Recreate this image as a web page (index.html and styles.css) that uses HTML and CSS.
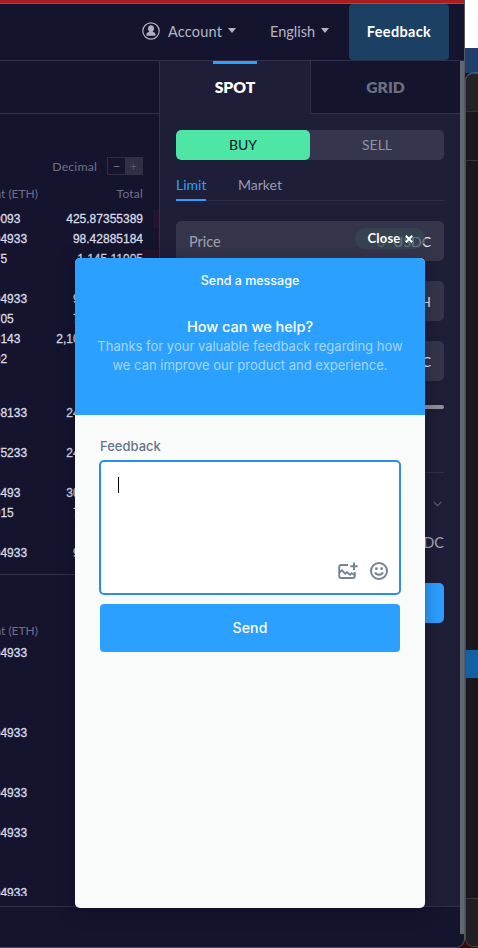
FILE: index.html
```html
<!DOCTYPE html>
<html lang="en">
<head>
<meta charset="utf-8">
<title>Spot trading</title>
<link rel="stylesheet" href="styles.css">
</head>
<body>
<div class="desktop">
  <div class="app">
    <header class="nav">
      <div class="nav-item account">
        <svg width="18" height="18" viewBox="0 0 18 18"><circle cx="9" cy="9" r="8.2" fill="none" stroke="#aeb0bf" stroke-width="1.2"/><path d="M9 3.2c2 0 3 1.5 3 3.3 0 1.5-.6 2.500-1.400 3 .3.8 3 .8 3 3.300 0 .8-.3 1-1 1H5.400c-.7 0-1-.2-1-1 0-2.500 2.700-2.500 3-3.300C6.600 9 6 8 6 6.500 6 4.700 7 3.200 9 3.200z" fill="#aeb0bf"/></svg>
        <span class="nav-text acc">Account</span><i class="caret"></i>
      </div>
      <div class="nav-item lang"><span class="nav-text eng">English</span><i class="caret"></i></div>
      <div class="feedback-btn"><span>Feedback</span></div>
    </header>
    <main class="content">
      <section class="book">
        <div class="book-top"></div>
        <div class="decimal"><span>Decimal</span><div class="step"><b>−</b><b class="plus">+</b></div></div>
        <div class="cols"><div class="amount-h"><span>Amount (ETH)</span></div><span class="total-h">Total</span></div>
        <div class="rows">
          <div class="row d1"><span>0093</span><span>425.87355389</span></div>
          <div class="row d2"><span>94933</span><span>98.42885184</span></div>
          <div class="row d3"><span>75</span><span>1,145.11905</span></div>
          <div class="row"></div>
          <div class="row"><span>94933</span><span>98.42885184</span></div>
          <div class="row"><span>705</span><span>78.42885184</span></div>
          <div class="row"><span>8143</span><span>2,109.42885184</span></div>
          <div class="row"><span>02</span></div>
          <div class="row"></div>
          <div class="row short"></div>
          <div class="row"><span>68133</span><span>248.42885184</span></div>
          <div class="row"></div>
          <div class="row"><span>75233</span><span>248.42885184</span></div>
          <div class="row"></div>
          <div class="row"><span>8493</span><span>308.42885184</span></div>
          <div class="row"><span>915</span><span>78.42885184</span></div>
          <div class="row"></div>
          <div class="row"><span>94933</span><span>98.42885184</span></div>
        </div>
        <div class="cols lower"><div class="amount-h"><span>Amount (ETH)</span></div></div>
        <div class="rows last">
          <div class="row"><span>94933</span></div>
          <div class="row"></div><div class="row"></div><div class="row"></div>
          <div class="row"><span>94933</span></div>
          <div class="row"></div><div class="row"></div>
          <div class="row"><span>94933</span></div>
          <div class="row"></div>
          <div class="row"><span>94933</span></div>
          <div class="row"></div><div class="row"></div>
          <div class="row"><span>94933</span></div>
        </div>
      </section>
      <section class="panel">
        <div class="tabs"><div class="tab on"><span>SPOT</span></div><div class="tab"><span>GRID</span></div></div>
        <div class="form">
          <div class="side"><div class="buy">BUY</div><div class="sell">SELL</div></div>
          <div class="types"><span class="type on">Limit</span><span class="type mk">Market</span></div>
          <div class="field"><span class="price">Price</span><span class="unit"><em>0</em>USDC</span></div>
          <div class="field"><span></span><span class="unit">ETH</span></div>
          <div class="field"><span></span><span class="unit">USDC</span></div>
          <div class="slider"></div>
          <div class="divider"></div>
          <div class="more"><svg width="9" height="6" viewBox="0 0 9 6"><path d="M.7.8l3.800 3.900L8.300.8" fill="none" stroke="#5c5e78" stroke-width="1.200"/></svg></div>
          <div class="sum">USDC</div>
          <div class="submit"></div>
        </div>
      </section>
      <div class="scroll"></div>
    </main>
    <footer class="foot"></footer>
  </div>
  <aside class="behind"><div class="white"></div><div class="navy"></div><div class="win"><div class="w1"></div><div class="w2"></div><div class="w3"></div><div class="sel"></div><div class="w4"></div><div class="w5"></div></div></aside>
</div>
<div class="close"><span>Close</span><svg width="8" height="8" viewBox="0 0 8 8"><path d="M.8.8l6.400 6.400M7.200.8L.8 7.200" stroke="#fff" stroke-width="2"/></svg></div>
<div class="widget">
  <div class="w-head">
    <div class="w-title">Send a message</div>
    <div class="w-ask">How can we help?</div>
    <div class="w-sub"><span class="s1">Thanks for your valuable feedback regarding how</span><br><span class="s2">we can improve our product and experience.</span></div>
  </div>
  <div class="w-body">
    <label class="w-label">Feedback</label>
    <div class="w-area">
      <i class="cursor"></i>
      <div class="w-tools">
        <svg width="20" height="18" viewBox="0 0 20 18"><g fill="none" stroke="#738496" stroke-width="1.900"><path d="M10 3H3.300Q1.200 3 1.200 5v9q0 2 2.100 2h11.400q2.100 0 2.100-2v-4"/><path d="M1.200 10.600L4 8.400l3.200 3.400 1.800-1.500 3 2.500 1.700-1.500 3 1.900"/><path d="M16 .5v7.400M12.300 4.200h7.400"/></g></svg>
        <svg width="18" height="18" viewBox="0 0 18 18"><circle cx="9" cy="9" r="8" fill="none" stroke="#738496" stroke-width="2"/><circle cx="6.400" cy="6.700" r="1.350" fill="#738496"/><circle cx="11.600" cy="6.700" r="1.350" fill="#738496"/><path d="M5.200 10.300c.8 3.300 6.800 3.300 7.600 0" fill="none" stroke="#738496" stroke-width="1.900"/></svg>
      </div>
    </div>
    <div class="w-send">Send</div>
  </div>
</div>
</body>
</html>
```

FILE: styles.css
```css
* { box-sizing: border-box; }
body { margin: 0; width: 478px; height: 948px; overflow: hidden; position: relative; background: #3a0810; font-family: Lato, "Liberation Sans", sans-serif; }
.desktop { display: flex; height: 948px; }
.app { width: 465px; height: 948px; display: flex; flex-direction: column; background: #14142e; border-right: 1px solid #555861; border-bottom: 1px solid #4b4a5c; border-radius: 0 0 9px 0; overflow: hidden; }
.nav { height: 61px; flex: none; border-top: 3px solid #a91d20; border-bottom: 1px solid #31304a; display: flex; align-items: stretch; box-shadow: inset 0 1px #b74545; color: #b4b6c5; font-size: 14.500px; }
.nav-item { display: flex; align-items: center; }
.account { margin-left: 142px; width: 128px; }
.account svg { margin-right: 8px; margin-top: -1px; }
.lang { width: 79px; }
.nav-text { flex: none; }
.acc { width: 54px; letter-spacing: .2px; }
.eng { width: 45px; }
.caret { border: 4px solid transparent; border-top: 5px solid #b4b6c5; border-bottom: 0; margin-left: 6px; margin-top: -2px; }
.feedback-btn { width: 100px; margin-top: 1px; background: #1b4064; border-radius: 4px; color: #fff; font-weight: 700; font-size: 14.500px; letter-spacing: .35px; display: flex; align-items: center; justify-content: center; padding-bottom: 1px; }
.content { height: 845px; flex: none; display: flex; }
.book { width: 160px; flex: none; border-right: 1px solid #30304a; overflow: hidden; }
.book-top { height: 53px; border-bottom: 1px solid #31304a; }
.decimal { margin: 43px 16px 0 0; height: 18px; display: flex; justify-content: flex-end; align-items: center; font-size: 12.300px; color: #6f7085; gap: 10px; letter-spacing: .15px; }
.step { display: flex; width: 36px; height: 18px; border: 1px solid #302f45; }
.step b { width: 17px; text-align: center; font: 12px/15px Inter, sans-serif; }
.step .plus { background: #302f45; color: #55566a; }
.cols { height: 34px; padding-right: 16px; padding-top: 2px; display: flex; justify-content: space-between; align-items: center; color: #6f7085; font-size: 12px; }
.total-h { letter-spacing: .2px; }
.amount-h { width: 38px; overflow: hidden; display: flex; justify-content: flex-end; white-space: nowrap; }
.amount-h span { flex: none; }
.row { height: 20px; padding: 0 16px 0 0; display: flex; justify-content: space-between; font: 12px/20px "Liberation Sans", sans-serif; color: #d9dae5; -webkit-text-stroke: .3px #d9dae5; }
.short { height: 14px; }
.row span:first-child { margin-left: -6.300px; }
.d1, .d2, .d3 { background: linear-gradient(#24142f, #24142f) right 1px/6px 18px no-repeat; }
.d2 { background-size: 1px 18px; }
.d3 { background-size: 17px 18px; }
.rows:not(.last) { height: 360px; }
.cols.lower { margin-top: 5px; border-top: 1px solid #33324b; height: 69px; padding-top: 42px; }
.last { height: 253px; overflow: hidden; }
.panel { width: 300px; flex: none; background: #1e1e38; }
.tabs { display: flex; height: 53px; font-weight: 800; font-size: 15.700px; }
.tab { width: 150px; display: flex; align-items: center; justify-content: center; background: #14142e; border-left: 1px solid #30304a; border-bottom: 1px solid #30304a; color: #6d6e80; padding-bottom: 1px; }
.tab.on { border: 0; padding-bottom: 2px; color: #fff; background: linear-gradient(#2ba0ff, #2ba0ff) 53px 0/44px 3px no-repeat; }
.form { padding: 16px 16px 0; }
.side { display: flex; height: 30px; border-radius: 5px; overflow: hidden; background: #35354d; font-size: 14px; line-height: 30px; text-align: center; }
.buy { width: 134px; background: #4de6a4; border-radius: 5px; color: #11142c; }
.sell { width: 134px; color: #9293a5; }
.types { display: flex; gap: 32px; height: 41px; border-bottom: 1px solid #2d2d47; font-size: 14px; color: #999aac; margin-bottom: 20px; }
.type { height: 41px; line-height: 50px; }
.type.on { width: 30px; border-bottom: 2px solid #2ba0ff; color: #2ba0ff; }
.field { height: 40px; margin-bottom: 20px; padding: 0 13px; border-radius: 5px; background: #35354c; color: #a1a2b0; font-size: 14.500px; display: flex; align-items: center; justify-content: space-between; }
.unit { color: #e3e3ea; font-size: 14px; }
.unit em { font-style: normal; margin-right: 8px; opacity: .6; }
.slider { height: 4px; margin-top: 24px; background: #918e9d; border-radius: 2px; }
.divider { height: 1px; margin-top: 63px; background: #30304a; }
.more { height: 61px; display: flex; justify-content: flex-end; align-items: center; padding-right: 2px; }
.sum { height: 18px; font-size: 14.500px; line-height: 18px; text-align: right; color: #aaaab8; }
.submit { height: 40px; margin-top: 31px; border-radius: 5px; background: #2ba0ff; }
.scroll { width: 4px; height: 873px; background: #5f6973; flex: none; position: relative; }
.foot { height: 41px; border-top: 1px solid #30304a; margin-right: 4px; }
.behind { width: 13px; height: 948px; background: #3a0810; }
.white { height: 48px; background: #fff; }
.navy { height: 25px; background: #1e406b; }
.win { height: 874px; background: #1a171c; border: 1px solid #4c4c4f; border-right: 0; border-radius: 9px 0 0 9px; overflow: hidden; box-shadow: 0 -1px #34618d; }
.w1 { height: 38px; border-bottom: 1px solid #333235; background: #232325; }
.w2 { height: 49px; border-bottom: 1px solid #38363b; }
.w3 { height: 489px; }
.sel { height: 28px; background: #1062a5; }
.w4 { height: 221px; border-bottom: 1px solid #38363b; }
.w5 { height: 50px; background: #211f22; }
.close { position: absolute; left: 355px; top: 228px; width: 70px; height: 21px; padding: 0 0 2px 1px; border-radius: 11px; background: rgba(57, 72, 82, .7); color: #fff; font-weight: 700; font-size: 13px; letter-spacing: .2px; display: flex; align-items: center; justify-content: center; gap: 5px; }
.close svg { margin-top: 2px; }
.widget { position: absolute; left: 75px; top: 258px; width: 350px; height: 650px; border-radius: 5px; overflow: hidden; background: #f9fbfb; box-shadow: 0 3px 18px rgba(12, 8, 25, .35); font-family: Inter, sans-serif; }
.w-head { height: 157px; padding-top: 14px; text-align: center; background: #2ba0ff; color: #fff; }
.w-title { font-size: 12.500px; line-height: 18px; font-weight: 500; }
.w-ask { margin-top: 27px; font-size: 14.500px; line-height: 20px; font-weight: 500; }
.w-sub { font-size: 13px; line-height: 19px; color: #a5d7ff; }
.w-body { padding: 22px 24px 0; }
.w-label { display: block; margin-left: 1px; height: 23px; font-size: 13px; line-height: 19px; font-weight: 500; color: #667587; }
.w-area { height: 135px; width: 302px; border: 2px solid #2a90e5; border-radius: 5px; background: #fff; padding: 15px 11px 13px 17px; display: flex; flex-direction: column; justify-content: space-between; }
.cursor { width: 1px; height: 16px; background: #000; }
.w-tools { display: flex; justify-content: flex-end; gap: 12px; align-items: flex-end; }
.w-send { margin: 9px 1px 0; height: 48px; border-radius: 4px; background: #2ba0ff; color: #fff; text-align: center; font-size: 14px; line-height: 48px; font-weight: 500; letter-spacing: .2px; }
```
